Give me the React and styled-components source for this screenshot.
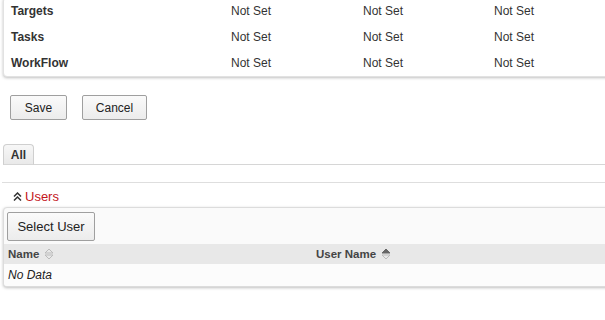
import React from 'react';
import styled, { createGlobalStyle } from 'styled-components';

const Global = createGlobalStyle`
  body {
    margin: 0;
    background: #fff;
    font-family: "Liberation Sans", Arial, sans-serif;
    font-size: 12px;
    color: #333;
    overflow: hidden;
  }
`;

const Page = styled.div`
  width: 605px;
  height: 320px;
  overflow: hidden;
`;

const SettingsPanel = styled.div`
  margin: -3px -10px 0 3px;
  border: 1px solid #e2e2e2;
  border-radius: 4px;
  background: #fff;
  box-shadow: 0 1px 3px rgba(0, 0, 0, 0.25);
`;

const SettingsRow = styled.div`
  display: grid;
  grid-template-columns: 220px 132px 131px 1fr;
  height: 26px;
  align-items: center;
  padding-left: 7px;
`;

const Label = styled.div`
  font-weight: bold;
  color: #333;
`;

const Value = styled.div`
  color: #333;
`;

const Actions = styled.div`
  display: flex;
  gap: 15px;
  padding: 18px 0 0 10px;
`;

const Button = styled.button`
  height: ${p => (p.$tall ? '29px' : '25px')};
  width: ${p => p.$w}px;
  padding: 0;
  border: 1px solid #9f9f9f;
  border-radius: 2px;
  background: linear-gradient(#fafafa, #ececec);
  font-family: "Liberation Sans", Arial, sans-serif;
  font-size: ${p => (p.$tall ? '13px' : '12px')};
  color: #222;
`;

const TabStrip = styled.div`
  display: flex;
  margin: 24px 0 0 3px;
  border-bottom: 1px solid #d6d6d6;
  height: 20px;
  align-items: flex-end;
`;

const Tab = styled.div`
  width: 29px;
  height: 19px;
  margin-bottom: -1px;
  border: 1px solid #cfcfcf;
  border-bottom-color: #d6d6d6;
  border-radius: 4px 4px 0 0;
  background: linear-gradient(#f7f7f7, #e9e9e9);
  font-weight: bold;
  color: #333;
  display: flex;
  align-items: center;
  justify-content: center;
`;

const Divider = styled.div`
  margin: 17px 0 0 2px;
  border-top: 1px solid #dedede;
`;

const SectionTitle = styled.div`
  display: flex;
  align-items: center;
  gap: 3px;
  padding: 4px 0 0 13px;
  height: 18px;
  color: #c4161c;
  font-size: 13px;
`;

const UsersPanel = styled.div`
  margin: 2px -10px 0 3px;
  border: 1px solid #dcdcdc;
  border-radius: 4px;
  background: #fafafa;
  box-shadow: 0 1px 3px rgba(0, 0, 0, 0.25);
  overflow: hidden;
`;

const Toolbar = styled.div`
  padding: 4px 3px 3px;
`;

const GridRow = styled.div`
  display: grid;
  grid-template-columns: 308px 1fr;
  align-items: center;
  height: ${p => (p.$head ? '20px' : '22px')};
  background: ${p => (p.$head ? '#e8e8e8' : '#fcfcfc')};
  padding-left: 4px;
`;

const HeadCell = styled.div`
  display: flex;
  align-items: center;
  gap: 5px;
  font-weight: bold;
  font-size: 11.5px;
  color: #444;
`;

const EmptyCell = styled.div`
  font-style: italic;
  color: #222;
`;

const SortIcon = ({ active }) => (
  <svg width="10" height="12" viewBox="0 0 10 12">
    <path d="M1 5 L5 1 L9 5 Z" fill={active ? '#666' : 'none'} stroke={active ? '#666' : '#bbb'} strokeWidth="1" />
    <path d="M1 7 L5 11 L9 7 Z" fill="none" stroke="#bbb" strokeWidth="1" />
  </svg>
);

const Collapse = () => (
  <svg width="9" height="9" viewBox="0 0 9 9">
    <path d="M1 4.5 L4.5 1 L8 4.5 M1 8.5 L4.5 5 L8 8.5" fill="none" stroke="#333" strokeWidth="1.5" />
  </svg>
);

const rows = ['Targets', 'Tasks', 'WorkFlow'];

export default function App() {
  return (
    <Page>
      <Global />
      <SettingsPanel>
        {rows.map(r => (
          <SettingsRow key={r}>
            <Label>{r}</Label>
            <Value>Not Set</Value>
            <Value>Not Set</Value>
            <Value>Not Set</Value>
          </SettingsRow>
        ))}
      </SettingsPanel>
      <Actions>
        <Button $w={57}>Save</Button>
        <Button $w={65}>Cancel</Button>
      </Actions>
      <TabStrip>
        <Tab>All</Tab>
      </TabStrip>
      <Divider />
      <SectionTitle>
        <Collapse />
        Users
      </SectionTitle>
      <UsersPanel>
        <Toolbar>
          <Button $tall $w={88}>Select User</Button>
        </Toolbar>
        <GridRow $head>
          <HeadCell>Name <SortIcon /></HeadCell>
          <HeadCell>User Name <SortIcon active /></HeadCell>
        </GridRow>
        <GridRow>
          <EmptyCell>No Data</EmptyCell>
        </GridRow>
      </UsersPanel>
    </Page>
  );
}
